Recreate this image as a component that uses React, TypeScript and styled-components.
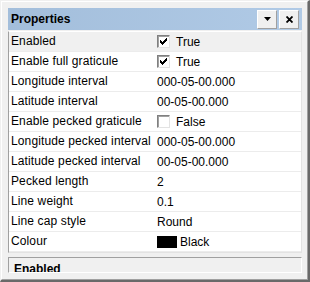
import React from "react";
import styled, { createGlobalStyle } from "styled-components";

const GlobalStyle = createGlobalStyle`
  html, body {
    margin: 0;
    padding: 0;
    background: #f0f0f0;
    font-family: "Liberation Sans", Arial, sans-serif;
    font-size: 12px;
    color: #000;
  }
`;

const Frame = styled.div`
  width: 310px;
  height: 282px;
  box-sizing: border-box;
  border-style: solid;
  border-width: 1px 2px 2px 1px;
  border-color: #f0f0f0 #696969 #696969 #f0f0f0;
  background: #f0f0f0;
`;

const Inner = styled.div`
  height: 100%;
  box-sizing: border-box;
  border-style: solid;
  border-width: 1px;
  border-color: #ffffff #a0a0a0 #a0a0a0 #ffffff;
  padding: 6px 5px 0 6px;
  display: flex;
  flex-direction: column;
`;

const TitleBar = styled.div`
  height: 22px;
  flex: none;
  display: flex;
  align-items: center;
  background: linear-gradient(to right, #a3bedb, #b0cae6);
  padding: 0 3px 0 3px;
`;

const TitleText = styled.div`
  flex: 1;
  font-weight: bold;
  font-size: 12px;
`;

const TitleButtons = styled.div`
  display: flex;
  gap: 2px;
`;

const CaptionButton = styled.div`
  width: 20px;
  height: 19px;
  box-sizing: border-box;
  background: #f0f0f0;
  border-style: solid;
  border-width: 1px;
  border-color: #ffffff #a0a0a0 #a0a0a0 #ffffff;
  display: flex;
  align-items: center;
  justify-content: center;
`;

const Grid = styled.div`
  margin-top: 1px;
  flex: none;
  border-style: solid;
  border-width: 1px;
  border-color: #ffffff #e3e3e3 #e3e3e3 #a0a0a0;
  background: #ffffff;
`;

const Row = styled.div<{ $selected?: boolean }>`
  display: flex;
  height: 20px;
  box-sizing: border-box;
  border-bottom: 1px solid #ececec;
  background: ${(p) => (p.$selected ? "#f0f0f0" : "#ffffff")};
`;

const LabelCell = styled.div`
  width: 146px;
  flex: none;
  box-sizing: border-box;
  padding: 0 2px 0 2px;
  line-height: 19px;
  letter-spacing: 0.12px;
  white-space: nowrap;
  overflow: hidden;
`;

const ValueCell = styled.div`
  flex: 1;
  display: flex;
  align-items: center;
  padding-left: 2px;
  white-space: nowrap;
  overflow: hidden;
`;

const CheckBox = styled.span`
  width: 13px;
  height: 13px;
  box-sizing: border-box;
  background: #ffffff;
  border-style: solid;
  border-width: 1px;
  border-color: #808080 #e3e3e3 #e3e3e3 #808080;
  box-shadow: inset 1px 1px 0 #a0a0a0;
  display: flex;
  align-items: center;
  justify-content: center;
  margin-right: 6px;
  flex: none;
`;

const Swatch = styled.span<{ $color: string }>`
  width: 20px;
  height: 12px;
  background: ${(p) => p.$color};
  margin-right: 3px;
  flex: none;
`;

const Description = styled.div`
  margin-top: 4px;
  height: 16px;
  flex: none;
  box-sizing: border-box;
  border-style: solid;
  border-width: 1px;
  border-color: #a0a0a0 #ffffff #ffffff #a0a0a0;
  overflow: hidden;
  padding: 4px 0 0 5px;
  font-weight: bold;
  line-height: 14px;
`;

const Check = () => (
  <svg width="7" height="7" viewBox="0 0 7 7" shapeRendering="crispEdges">
    <polygon points="0,2 2,4 6,0 7,0 7,2 2,7 0,5" fill="#000" />
  </svg>
);

type Prop = {
  label: string;
  value: string;
  kind?: "check" | "color";
  checked?: boolean;
};

const props: Prop[] = [
  { label: "Enabled", value: "True", kind: "check", checked: true },
  { label: "Enable full graticule", value: "True", kind: "check", checked: true },
  { label: "Longitude interval", value: "000-05-00.000" },
  { label: "Latitude interval", value: "00-05-00.000" },
  { label: "Enable pecked graticule", value: "False", kind: "check", checked: false },
  { label: "Longitude pecked interval", value: "000-05-00.000" },
  { label: "Latitude pecked interval", value: "00-05-00.000" },
  { label: "Pecked length", value: "2" },
  { label: "Line weight", value: "0.1" },
  { label: "Line cap style", value: "Round" },
  { label: "Colour", value: "Black", kind: "color" },
];

export default function App() {
  return (
    <>
      <GlobalStyle />
      <Frame>
        <Inner>
          <TitleBar>
            <TitleText>Properties</TitleText>
            <TitleButtons>
              <CaptionButton>
                <svg width="7" height="4" viewBox="0 0 7 4">
                  <polygon points="0,0 7,0 3.5,4" fill="#000" />
                </svg>
              </CaptionButton>
              <CaptionButton>
                <svg width="7" height="7" viewBox="0 0 7 7">
                  <path d="M0.5 0.5 L6.5 6.5 M6.5 0.5 L0.5 6.5" stroke="#000" strokeWidth="1.8" />
                </svg>
              </CaptionButton>
            </TitleButtons>
          </TitleBar>
          <Grid>
            {props.map((p, i) => (
              <Row key={p.label} $selected={i === 0}>
                <LabelCell>{p.label}</LabelCell>
                <ValueCell>
                  {p.kind === "check" && <CheckBox>{p.checked && <Check />}</CheckBox>}
                  {p.kind === "color" && <Swatch $color="#000000" />}
                  {p.value}
                </ValueCell>
              </Row>
            ))}
          </Grid>
          <Description>Enabled</Description>
        </Inner>
      </Frame>
    </>
  );
}
